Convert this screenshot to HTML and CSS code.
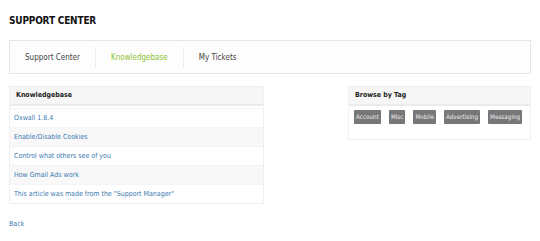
FILE: index.html
```html
<!DOCTYPE html>
<html lang="en">
<head>
    <meta charset="UTF-8">
    <title>Support Center</title>
    <link rel="stylesheet" href="styles.css">
</head>
<body>
    <h1 class="page-title">SUPPORT CENTER</h1>

    <div class="menu">
        <a href="#">Support Center</a>
        <a href="#" class="active">Knowledgebase</a>
        <a href="#">My Tickets</a>
    </div>

    <div class="columns">
        <div class="box kb-box">
            <div class="box-head">Knowledgebase</div>
            <ul class="kb-list">
                <li><a href="#">Oxwall 1.8.4</a></li>
                <li class="odd"><a href="#">Enable/Disable Cookies</a></li>
                <li><a href="#">Control what others see of you</a></li>
                <li class="odd"><a href="#">How Gmail Ads work</a></li>
                <li><a href="#">This article was made from the "Support Manager"</a></li>
            </ul>
        </div>

        <div class="box tag-box">
            <div class="box-head">Browse by Tag</div>
            <div class="tags">
                <a href="#">Account</a>
                <a href="#">Misc</a>
                <a href="#">Mobile</a>
                <a href="#">Advertising</a>
                <a href="#">Messaging</a>
            </div>
        </div>
    </div>

    <a href="#" class="back">Back</a>
</body>
</html>
```

FILE: styles.css
```css
/* Global */
body {
    font-family: 'DejaVu Sans Condensed', 'DejaVu Sans', sans-serif;
    font-size: 8px;
    margin: 0;
    padding: 0 9px;
    background: #fff;
    color: #333;
}

a {
    color: #3a7ab0;
    text-decoration: none;
}

.page-title {
    font-size: 10px;
    font-weight: bold;
    margin: 0;
    padding-top: 15px;
    height: 25px;
    letter-spacing: -0.2px;
    color: #111;
}

/* Top menu */
.menu {
    display: flex;
    align-items: center;
    height: 34px;
    border: 1px solid #e6e6e6;
    background: #fdfdfd;
    width: 522px;
    box-sizing: border-box;
}

.menu a {
    color: #444;
    padding: 0 15px;
    border-left: 1px solid #ececec;
    line-height: 21px;
}

.menu a:first-child {
    border-left: none;
}

.menu a.active {
    color: #8cc12e;
}

/* Boxes */
.columns {
    display: flex;
    justify-content: space-between;
    margin-top: 12px;
    width: 522px;
    font-size: 7px;
}

.box {
    border: 1px solid #f0f0f0;
    border-top: none;
    box-sizing: border-box;
}

.kb-box {
    width: 255px;
}

.tag-box {
    width: 183px;
    height: 54px;
}

.box-head {
    background: #f6f6f6;
    border-top: 1px solid #eeeeee;
    border-bottom: 2px solid #ebebeb;
    font-weight: bold;
    color: #222;
    height: 17px;
    line-height: 17px;
    padding-left: 6px;
}

.kb-list {
    list-style: none;
    margin: 2px 0 0;
    padding: 0;
}

.kb-list li {
    height: 18px;
    line-height: 18px;
    padding-left: 4px;
    border-top: 1px solid #f4f4f4;
}

.kb-list li.odd {
    background: #f8f8f8;
}

.tags {
    display: flex;
    gap: 8px;
    padding: 4px 5px;
}

.tags a {
    background: #777;
    color: #eee;
    font-size: 6.3px;
    padding: 0 2px;
    line-height: 14px;
    border-radius: 1px;
}

.back {
    display: inline-block;
    margin-top: 16px;
    font-size: 7px;
}
```
